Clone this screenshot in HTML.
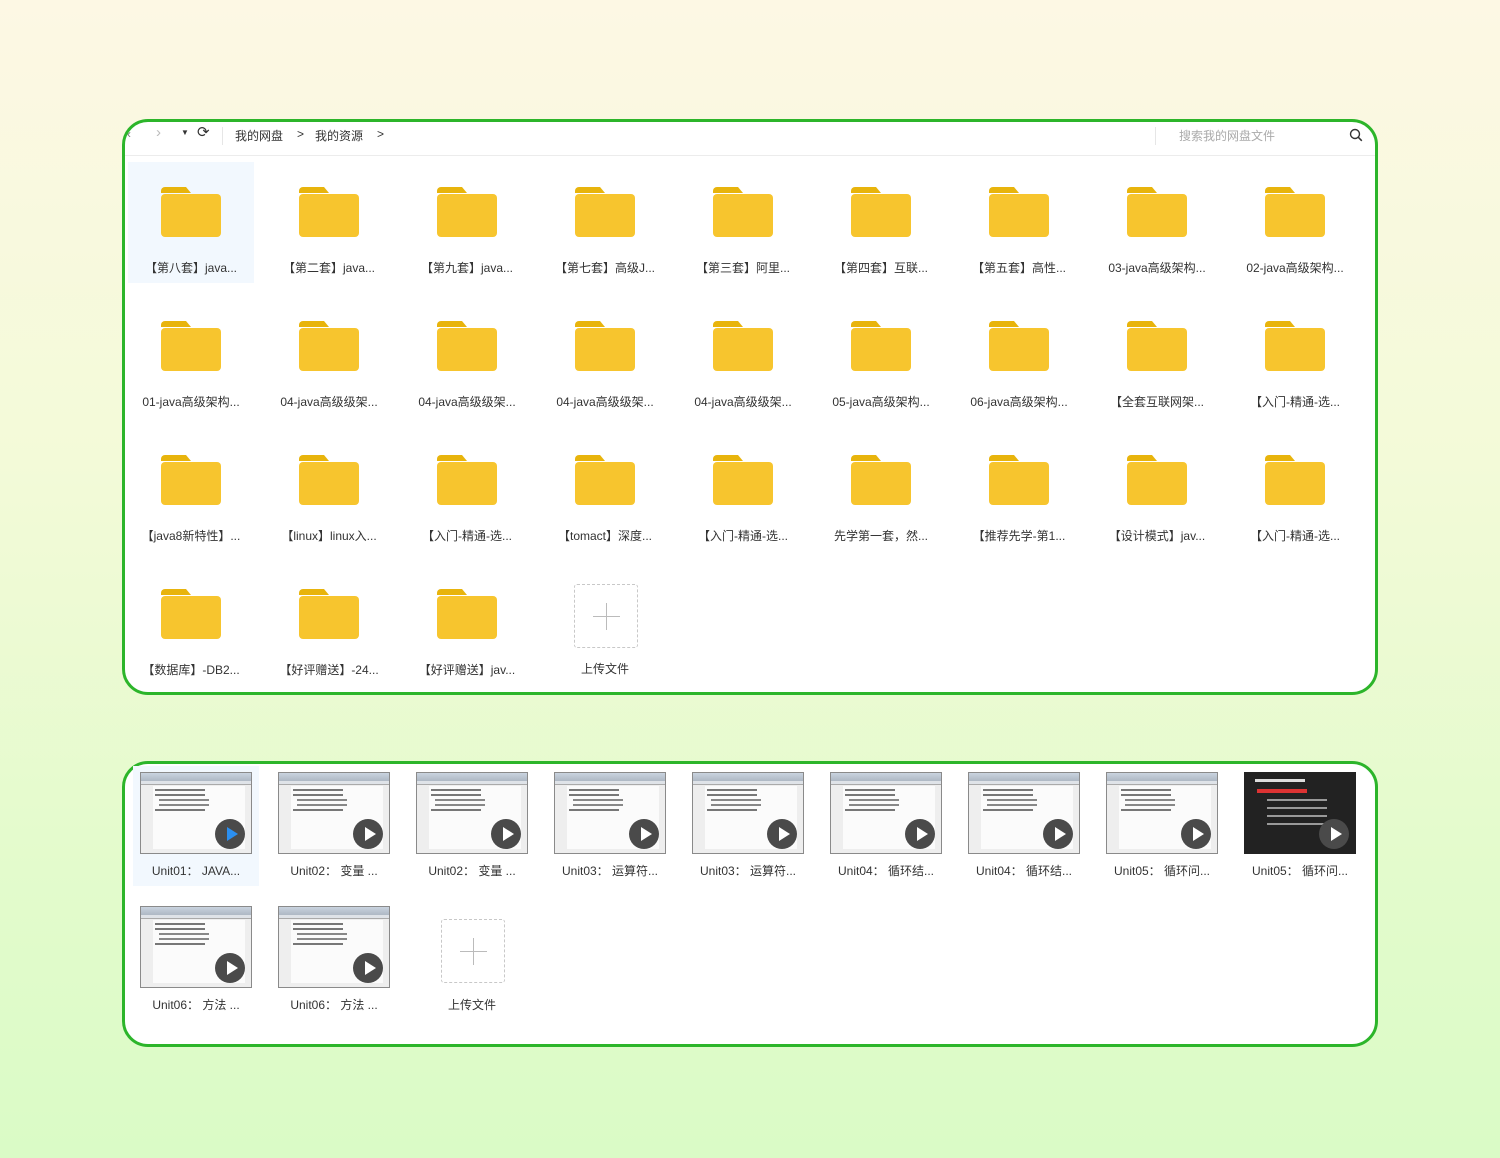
<!DOCTYPE html>
<html><head><meta charset="utf-8"><style>
*{margin:0;padding:0;box-sizing:border-box}
body{width:1500px;height:1158px;overflow:hidden;position:relative;font-family:"Liberation Sans","Noto Sans CJK SC",sans-serif;background:linear-gradient(180deg,#fdf8e4 0%,#f3fad8 40%,#e3fbcc 75%,#dafbc6 100%)}
.panel{position:absolute;left:122px;width:1256px;background:#fff;border:3px solid #2cb52a;border-radius:26px;overflow:hidden}
#g1{position:absolute;left:0;top:0;z-index:5}
.it{position:absolute;width:126px;text-align:center;font-size:12px;color:#333}
.sel{background:#f2f8fe}
.fold{position:absolute;left:33px;top:25px}
.lab{position:absolute;left:0;width:126px;text-align:center;white-space:nowrap}
.th{position:absolute;left:7px;top:6px;width:112px;height:82px;border:1px solid #8a8a8a;background:#eee;overflow:hidden}
.th .tb{height:8px;background:linear-gradient(#c9d3df,#aeb8c4)}
.th .ru{height:4px;background:#dfe3e8;border-bottom:1px solid #aaa}
.th .pg{position:absolute;left:12px;top:13px;right:6px;bottom:4px;background:#fbfbfb}
.th .ln{position:absolute;left:14px;top:16px;width:50px;height:2px;background:#777;box-shadow:0 5px 0 #777,4px 10px 0 #888,4px 15px 0 #888,0 20px 0 #777}
.pl{position:absolute;right:6px;bottom:4px;width:30px;height:30px;border-radius:50%;background:#4a4a4a}
.pl:after{content:"";position:absolute;left:12px;top:8px;border-left:11px solid #fff;border-top:7px solid transparent;border-bottom:7px solid transparent}
.pl.b:after{border-left-color:#2b8ff0}
.up{position:absolute;left:32px;top:0;width:64px;height:64px;border:1px dashed #c8c8c8;border-radius:3px}
.up:before{content:"";position:absolute;left:18px;top:31px;width:27px;height:1px;background:#bbb}
.up:after{content:"";position:absolute;left:31px;top:18px;width:1px;height:27px;background:#bbb}
</style></head><body>
<svg width="0" height="0" style="position:absolute"><defs><g id="f"><path d="M0 4a4 4 0 0 1 4-4h21l5 6H0z" fill="#e8b40c"/><rect x="0" y="7" width="60" height="43" rx="4" fill="#f7c52e"/></g></defs></svg>

<div class="panel" style="top:119px;height:576px">
 <div style="position:absolute;left:0;top:0;right:0;height:34px;border-bottom:1px solid #ececec;font-size:12px;color:#333">
  <span style="position:absolute;left:2px;top:5px;color:#777">‹</span>
  <span style="position:absolute;left:31px;top:2px;color:#bbb;font-size:15px">›</span>
  <span style="position:absolute;left:56px;top:6px;font-size:8px">▼</span>
  <span style="position:absolute;left:72px;top:1px;font-size:15px">⟳</span>
  <span style="position:absolute;left:97px;top:5px;width:1px;height:18px;background:#e6e6e6"></span>
  <span style="position:absolute;left:110px;top:5px">我的网盘</span>
  <span style="position:absolute;left:172px;top:5px">&gt;</span>
  <span style="position:absolute;left:190px;top:5px">我的资源</span>
  <span style="position:absolute;left:252px;top:5px">&gt;</span>
  <span style="position:absolute;left:1030px;top:5px;width:1px;height:18px;background:#e6e6e6"></span>
  <span style="position:absolute;left:1054px;top:5px;color:#aaa">搜索我的网盘文件</span>
  <svg style="position:absolute;left:1224px;top:6px" width="14" height="14"><circle cx="6" cy="6" r="4.5" fill="none" stroke="#333" stroke-width="1.4"/><path d="M9.3 9.3l3.5 3.5" stroke="#333" stroke-width="1.5"/></svg>
 </div>
</div>
<div class="panel" style="top:761px;height:286px"></div>
<div id="g1"></div>

<script>
var n=["【第八套】java...","【第二套】java...","【第九套】java...","【第七套】高级J...","【第三套】阿里...","【第四套】互联...","【第五套】高性...","03-java高级架构...","02-java高级架构...",
"01-java高级架构...","04-java高级级架...","04-java高级级架...","04-java高级级架...","04-java高级级架...","05-java高级架构...","06-java高级架构...","【全套互联网架...","【入门-精通-选...",
"【java8新特性】...","【linux】linux入...","【入门-精通-选...","【tomact】深度...","【入门-精通-选...","先学第一套，然...","【推荐先学-第1...","【设计模式】jav...","【入门-精通-选...",
"【数据库】-DB2...","【好评赠送】-24...","【好评赠送】jav..."];
var h="";
n.forEach(function(t,i){var c=i%9,r=Math.floor(i/9);var x=128+c*138,y=162+r*134;
h+='<div class="it'+(i==0?' sel':'')+'" style="left:'+x+'px;top:'+y+'px;height:121px"><svg class="fold" width="60" height="50"><use href="#f"/></svg><div class="lab" style="top:97px">'+t+'</div></div>';});
h+='<div class="it" style="left:542px;top:584px;height:100px"><div class="up"></div><div class="lab" style="top:76px">上传文件</div></div>';
var u=["Unit01： JAVA...","Unit02： 变量 ...","Unit02： 变量 ...","Unit03： 运算符...","Unit03： 运算符...","Unit04： 循环结...","Unit04： 循环结...","Unit05： 循环问...","Unit05： 循环问...","Unit06： 方法 ...","Unit06： 方法 ..."];
u.forEach(function(t,i){var c=i%9,r=Math.floor(i/9);var x=133+c*138,y=766+r*134;
var dark=(i==8);
h+='<div class="it'+(i==0?' sel':'')+'" style="left:'+x+'px;top:'+y+'px;height:120px"><div class="th"'+(dark?' style="background:#222;border-color:#222"':'')+'>'+(dark?'<div style="position:absolute;left:10px;top:6px;width:50px;height:3px;background:#ddd"></div><div style="position:absolute;left:12px;top:16px;width:50px;height:4px;background:#d33"></div><div style="position:absolute;left:22px;top:26px;width:60px;height:2px;background:#999;box-shadow:0 8px 0 #999,0 16px 0 #999,0 24px 0 #999"></div>':'<div class="tb"></div><div class="ru"></div><div class="pg"></div><div class="ln"></div>')+'<div class="pl'+(i==0?' b':'')+'"></div></div><div class="lab" style="top:96px">'+t+'</div></div>';});
h+='<div class="it" style="left:409px;top:919px;height:100px"><div class="up"></div><div class="lab" style="top:77px">上传文件</div></div>';
document.getElementById("g1").innerHTML=h;
</script>
</body></html>
